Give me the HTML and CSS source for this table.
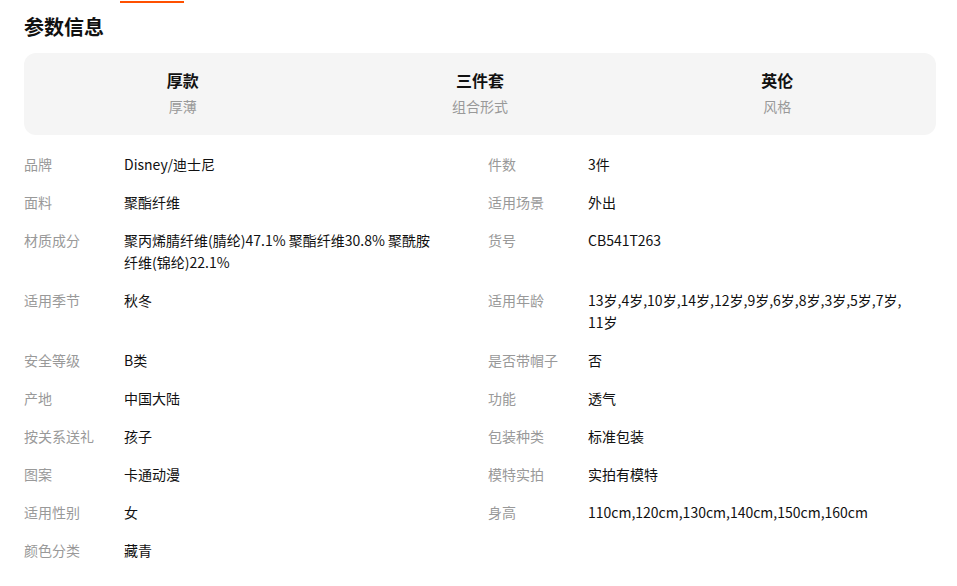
FILE: index.html
```html
<!DOCTYPE html>
<html lang="zh-CN">
<head>
    <meta charset="UTF-8">
    <meta name="viewport" content="width=device-width, initial-scale=1.0">
    <title>参数信息</title>
    <link rel="stylesheet" href="styles.css">
</head>
<body>
    <div class="tab-bar">
        <span class="tab-active"></span>
    </div>
    <div class="params">
        <h2 class="params-title">参数信息</h2>
        <div class="highlights">
            <div class="highlight">
                <div class="highlight-value">厚款</div>
                <div class="highlight-name">厚薄</div>
            </div>
            <div class="highlight">
                <div class="highlight-value">三件套</div>
                <div class="highlight-name">组合形式</div>
            </div>
            <div class="highlight">
                <div class="highlight-value">英伦</div>
                <div class="highlight-name">风格</div>
            </div>
        </div>
        <div class="attr-list">
            <div class="attr"><span class="attr-name">品牌</span><span class="attr-value">Disney/迪士尼</span></div>
            <div class="attr"><span class="attr-name">件数</span><span class="attr-value">3件</span></div>
            <div class="attr"><span class="attr-name">面料</span><span class="attr-value">聚酯纤维</span></div>
            <div class="attr"><span class="attr-name">适用场景</span><span class="attr-value">外出</span></div>
            <div class="attr"><span class="attr-name">材质成分</span><span class="attr-value">聚丙烯腈纤维(腈纶)47.1% 聚酯纤维30.8% 聚酰胺纤维(锦纶)22.1%</span></div>
            <div class="attr"><span class="attr-name">货号</span><span class="attr-value">CB541T263</span></div>
            <div class="attr"><span class="attr-name">适用季节</span><span class="attr-value">秋冬</span></div>
            <div class="attr"><span class="attr-name">适用年龄</span><span class="attr-value">13岁,4岁,10岁,14岁,12岁,9岁,6岁,8岁,3岁,5岁,7岁,11岁</span></div>
            <div class="attr"><span class="attr-name">安全等级</span><span class="attr-value">B类</span></div>
            <div class="attr"><span class="attr-name">是否带帽子</span><span class="attr-value">否</span></div>
            <div class="attr"><span class="attr-name">产地</span><span class="attr-value">中国大陆</span></div>
            <div class="attr"><span class="attr-name">功能</span><span class="attr-value">透气</span></div>
            <div class="attr"><span class="attr-name">按关系送礼</span><span class="attr-value">孩子</span></div>
            <div class="attr"><span class="attr-name">包装种类</span><span class="attr-value">标准包装</span></div>
            <div class="attr"><span class="attr-name">图案</span><span class="attr-value">卡通动漫</span></div>
            <div class="attr"><span class="attr-name">模特实拍</span><span class="attr-value">实拍有模特</span></div>
            <div class="attr"><span class="attr-name">适用性别</span><span class="attr-value">女</span></div>
            <div class="attr"><span class="attr-name">身高</span><span class="attr-value">110cm,120cm,130cm,140cm,150cm,160cm</span></div>
            <div class="attr"><span class="attr-name">颜色分类</span><span class="attr-value">藏青</span></div>
        </div>
    </div>
</body>
</html>
```

FILE: styles.css
```css
body {
    margin: 0;
    padding: 0;
    background-color: #fff;
    color: #111;
    font-family: "Microsoft YaHei", "Noto Sans CJK SC", sans-serif;
    font-size: 14px;
}
.tab-bar {
    height: 1px;
    padding-left: 120px;
}
.tab-active {
    display: block;
    width: 64px;
    height: 2px;
    margin-top: 1px;
    background-color: #ff5000;
}
.params {
    padding: 0 21px 0 24px;
}
.params-title {
    margin: 11px 0 12px;
    font-size: 20px;
    line-height: 28px;
    font-weight: bold;
    color: #111;
}
.highlights {
    display: flex;
    padding: 16px 10px 19px;
    background-color: #f5f5f5;
    border-radius: 12px;
}
.highlight {
    flex: 1;
    text-align: center;
}
.highlight-value {
    font-size: 16px;
    line-height: 22px;
    font-weight: bold;
    color: #111;
}
.highlight-name {
    margin-top: 5px;
    font-size: 14px;
    line-height: 20px;
    color: #999;
}
.attr-list {
    display: grid;
    grid-template-columns: 1fr 1fr;
    column-gap: 16px;
    row-gap: 16px;
    margin-top: 18px;
}
.attr {
    display: flex;
    line-height: 22px;
}
.attr-name {
    flex: none;
    width: 100px;
    color: #999;
}
.attr-value {
    width: 317px;
    color: #111;
    word-break: break-all;
}
```
